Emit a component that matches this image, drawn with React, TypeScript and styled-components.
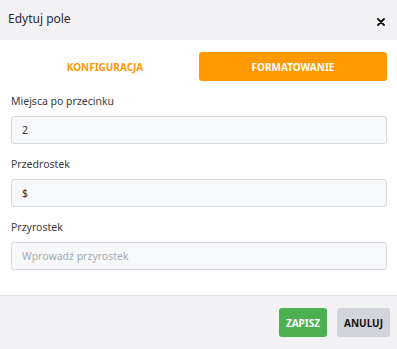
import React, { useState } from 'react'
import styled, { createGlobalStyle } from 'styled-components'

const GlobalStyle = createGlobalStyle`
  html, body {
    margin: 0;
    padding: 0;
    background: #ffffff;
  }
  body {
    font-family: "Noto Sans", "Open Sans", sans-serif;
  }
  * {
    box-sizing: border-box;
  }
`;

type TabKey = 'config' | 'format';

interface FieldDef {
  label: string;
  value: string;
  placeholder?: string;
}

const fields: FieldDef[] = [
  { label: 'Miejsca po przecinku', value: '2' },
  { label: 'Przedrostek', value: '$' },
  { label: 'Przyrostek', value: '', placeholder: 'Wprowadź przyrostek' },
];

const App: React.FC = () => {
  const [tab, setTab] = useState<TabKey>('format');

  return (
    <>
      <GlobalStyle />
      <Modal>
        <Header>
          <Title>Edytuj pole</Title>
          <CloseButton aria-label="Zamknij">
            <svg width="8" height="8" viewBox="0 0 8 8">
              <path d="M1 1 L7 7 M7 1 L1 7" stroke="#111" strokeWidth="1.8" strokeLinecap="round" />
            </svg>
          </CloseButton>
        </Header>

        <Body>
          <Tabs>
            <Tab $active={tab === 'config'} onClick={() => setTab('config')}>
              KONFIGURACJA
            </Tab>
            <Tab $active={tab === 'format'} onClick={() => setTab('format')}>
              FORMATOWANIE
            </Tab>
          </Tabs>

          {fields.map(f => (
            <Field key={f.label}>
              <Label>{f.label}</Label>
              <Input defaultValue={f.value} placeholder={f.placeholder} />
            </Field>
          ))}
        </Body>

        <Footer>
          <SaveButton>ZAPISZ</SaveButton>
          <CancelButton>ANULUJ</CancelButton>
        </Footer>
      </Modal>
    </>
  )
}

const Modal = styled.div`
  width: 397px;
  height: 349px;
  display: flex;
  flex-direction: column;
  background: #ffffff;
`;

const Header = styled.div`
  height: 40px;
  background: #f2f2f4;
  display: flex;
  align-items: center;
  justify-content: space-between;
  padding: 0 12px 0 8px;
`;

const Title = styled.h3`
  margin: 0 0 3px 0;
  font-size: 12px;
  font-weight: 400;
  color: #2b2b38;
`;

const CloseButton = styled.button`
  background: none;
  border: none;
  padding: 0;
  margin-top: 3px;
  display: flex;
  cursor: pointer;
`;

const Body = styled.div`
  flex: 1;
  padding: 12px 10px 0 11px;
`;

const Tabs = styled.div`
  display: grid;
  grid-template-columns: 1fr 1fr;
  height: 29px;
  margin-bottom: 12px;
`;

const Tab = styled.button<{ $active: boolean }>`
  border: none;
  border-radius: 3px;
  font-family: inherit;
  font-size: 10px;
  font-weight: 700;
  cursor: pointer;
  background: ${p => (p.$active ? '#ff9900' : 'transparent')};
  color: ${p => (p.$active ? '#ffffff' : '#ff9900')};
`;

const Field = styled.div`
  display: flex;
  flex-direction: column;
  margin-bottom: 12px;
`;

const Label = styled.label`
  font-size: 10.5px;
  color: #3a3a44;
  line-height: 16px;
  margin-bottom: 7px;
`;

const Input = styled.input`
  height: 28px;
  padding: 0 10px;
  border: 1px solid #d6d9de;
  border-radius: 3px;
  background: #f7f8fa;
  font-family: inherit;
  font-size: 10.5px;
  color: #333;
  outline: none;

  &::placeholder {
    color: #a7abb2;
  }
`;

const Footer = styled.div`
  height: 54px;
  border-top: 1px solid #dedfe2;
  background: #f2f2f4;
  display: flex;
  align-items: center;
  justify-content: flex-end;
  gap: 10px;
  padding: 0 7px 0 0;
`;

const FooterButton = styled.button`
  height: 29px;
  border: none;
  border-radius: 3px;
  font-family: inherit;
  font-size: 10px;
  font-weight: 700;
  padding: 0 7px;
  cursor: pointer;
`;

const SaveButton = styled(FooterButton)`
  background: #4caf50;
  color: #ffffff;
`;

const CancelButton = styled(FooterButton)`
  background: #d1d4da;
  color: #111;
`;

export default App;
